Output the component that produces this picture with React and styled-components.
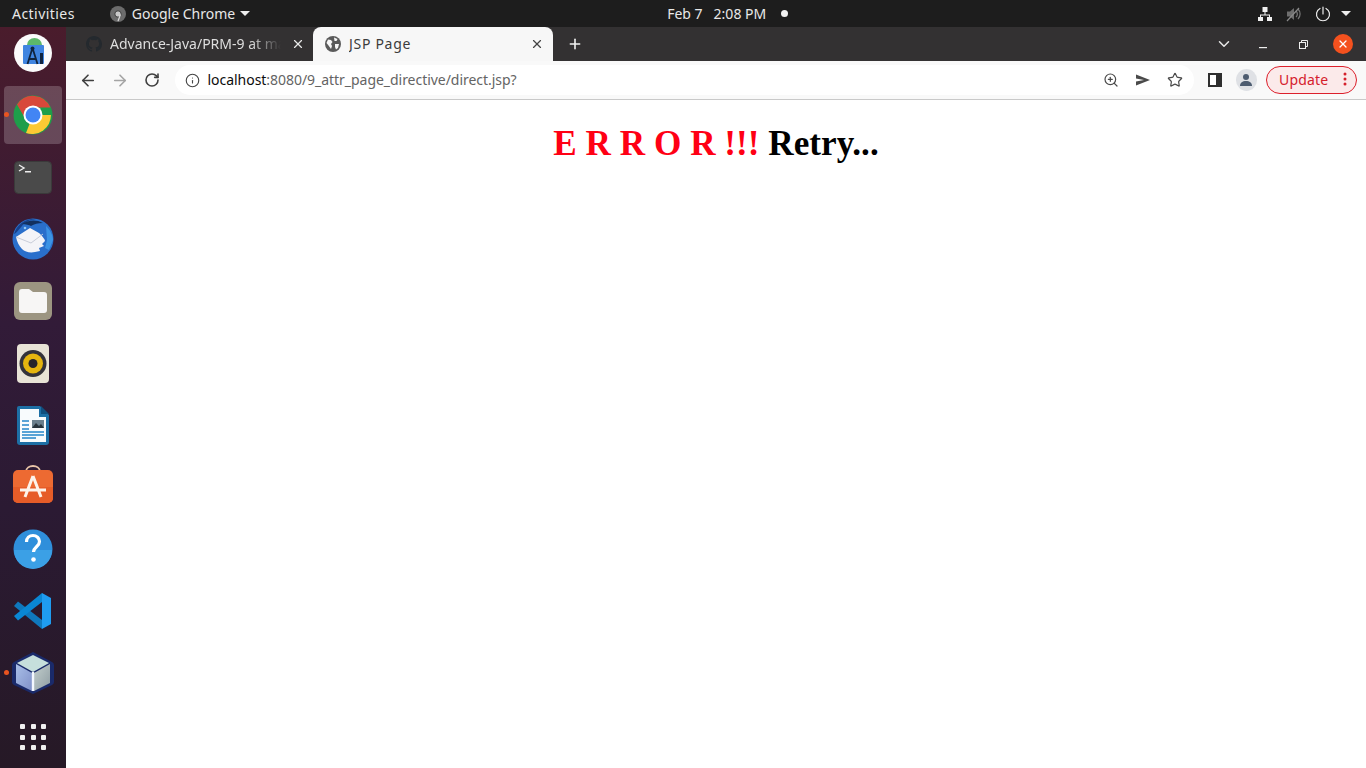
import React from 'react'
import styled, { createGlobalStyle } from 'styled-components'
import { ArrowLeft, ArrowRight, RotateCw, Info, ZoomIn, Star, X, Plus, ChevronDown } from 'lucide-react'

const Global = createGlobalStyle`
  html, body { margin: 0; padding: 0; height: 100%; overflow: hidden; background: #fff; }
  * { box-sizing: border-box; }
`

const Shell = styled.div`
  display: grid;
  grid-template-columns: 66px 1fr;
  grid-template-rows: 27px 1fr;
  width: 100vw;
  height: 100vh;
  overflow: hidden;
  font-family: "Noto Sans", sans-serif;
`

const TopBar = styled.header`
  grid-column: 1 / 3;
  display: flex;
  align-items: center;
  padding: 0 12px;
  background: #1d1d1d;
  color: #e8e8e8;
  font-size: 14px;
  z-index: 2;
`

const Activities = styled.span`
  letter-spacing: 0.45px;
`

const AppMenu = styled.div`
  display: flex;
  align-items: center;
  gap: 6px;
  margin-left: 35px;
`

const Caret = styled.span`
  width: 0;
  height: 0;
  border-left: 5px solid transparent;
  border-right: 5px solid transparent;
  border-top: 5px solid #eee;
  margin-left: ${p => p.$gap || 0}px;
`

const Clock = styled.div`
  display: flex;
  align-items: center;
  gap: 11px;
  margin-left: 417px;
`

const RecDot = styled.span`
  width: 7px;
  height: 7px;
  border-radius: 50%;
  background: #f2f2f2;
  margin-left: 4px;
`

const Tray = styled.div`
  display: flex;
  align-items: center;
  gap: 13px;
  margin-left: auto;
  padding-right: 3px;
`

const Dock = styled.nav`
  display: flex;
  flex-direction: column;
  align-items: center;
  background: linear-gradient(180deg, #4a1c2c 0%, #321b38 40%, #2b1a33 65%, #261926 100%);
`

const DockItem = styled.div`
  position: relative;
  flex: none;
  width: 58px;
  height: 58px;
  margin: ${p => p.$first ? '-3px' : '2px'} 0 2px;
  display: flex;
  align-items: center;
  justify-content: center;
  border-radius: 4px;
  background: ${p => p.$active ? 'rgba(255,255,255,0.2)' : 'transparent'};
  ${p => p.$grid ? 'transform: translateY(2px);' : ''}
`

const RunDot = styled.span`
  position: absolute;
  left: 0;
  top: 26px;
  width: 5px;
  height: 5px;
  border-radius: 50%;
  background: #e95420;
`

const Browser = styled.main`
  display: flex;
  flex-direction: column;
  min-width: 0;
`

const TabStrip = styled.div`
  flex: none;
  display: flex;
  align-items: flex-end;
  height: 34px;
  background: #333132;
  color: #e4e4e4;
`

const Tab = styled.div`
  position: relative;
  flex: none;
  display: flex;
  align-items: center;
  width: ${p => p.$w}px;
  height: 34px;
  padding-left: ${p => p.$pad}px;
  gap: ${p => p.$gap}px;
  font-size: 14px;
  color: ${p => p.$active ? '#3c3c3c' : '#dedede'};
  background: ${p => p.$active ? '#f7f7f7' : 'transparent'};
  border-radius: 8px 8px 0 0;
`

const TabTitle = styled.span`
  width: ${p => p.$w}px;
  margin-top: -2px;
  white-space: nowrap;
  overflow: hidden;
  letter-spacing: ${p => p.$spread || 0}px;
  ${p => p.$fade ? `
    -webkit-mask-image: linear-gradient(90deg, #000 82%, transparent 100%);
    mask-image: linear-gradient(90deg, #000 82%, transparent 100%);
  ` : ''}
`

const TabClose = styled.span`
  position: absolute;
  right: ${p => p.$active ? 9 : 8}px;
  top: 10px;
  display: flex;
  color: ${p => p.$active ? '#444' : '#e8e8e8'};
`

const NewTab = styled.span`
  display: flex;
  align-self: center;
  margin-left: 14px;
  color: #f2f2f2;
`

const WindowControls = styled.div`
  display: flex;
  align-items: center;
  align-self: center;
  margin-left: auto;
  padding-right: 13px;
  color: #e8e8e8;
`

const WinButton = styled.span`
  display: flex;
  align-items: center;
  justify-content: center;
  width: 20px;
  height: 20px;
  margin-left: ${p => p.$gap}px;
  border-radius: 50%;
  background: ${p => p.$close ? '#f4511e' : 'transparent'};
  color: ${p => p.$close ? '#fff' : 'inherit'};
`

const Toolbar = styled.div`
  flex: none;
  display: flex;
  align-items: center;
  height: 39px;
  padding: 0 9px 0 13px;
  background: #f9f9f9;
  border-bottom: 1px solid #c9c9c9;
`

const NavButton = styled.span`
  display: flex;
  justify-content: center;
  width: 18px;
  margin-right: 14px;
  color: ${p => p.$off ? '#a4a4a4' : '#3f3f3f'};
`

const Omnibox = styled.div`
  display: flex;
  align-items: center;
  flex: none;
  width: 1019px;
  height: 30px;
  padding: 0 10px;
  border-radius: 15px;
  background: #fff;
  font-size: 14px;
  color: #646464;
`

const Host = styled.span`
  color: #0c0c0c;
`

const Url = styled.span`
  margin: -2px 0 0 8px;
  white-space: nowrap;
  letter-spacing: -0.04px;
`

const OmniActions = styled.div`
  display: flex;
  align-items: center;
  gap: 16px;
  margin-left: auto;
  padding-right: 1px;
  color: #4a4a4a;
`

const SidePanelSlot = styled.span`
  display: flex;
  margin-left: 14px;
`

const Avatar = styled.span`
  display: flex;
  align-items: center;
  justify-content: center;
  width: 22px;
  height: 22px;
  margin-left: 14px;
  border-radius: 50%;
  background: #dfe1e5;
`

const UpdatePill = styled.div`
  display: flex;
  align-items: center;
  justify-content: space-between;
  flex: none;
  width: 91px;
  height: 28px;
  margin-left: 9px;
  padding: 0 9px 2px 12px;
  border: 1px solid #dc1f2b;
  border-radius: 14px;
  background: #fbeaea;
  color: #d5202c;
  font-size: 14px;
  letter-spacing: 0.2px;
`

const Page = styled.section`
  flex: 1;
  background: #fff;
  text-align: center;
`

const Heading = styled.h1`
  margin: 23px 0 0;
  font-family: "Liberation Serif", serif;
  font-size: 35.2px;
  font-weight: bold;
  line-height: 42px;
  color: #000;
`

const Red = styled.span`
  color: #ff0014;
`

const GridDots = styled.div`
  display: grid;
  grid-template-columns: repeat(3, 5px);
  grid-auto-rows: 5px;
  gap: 5.5px;
`

const GridDot = styled.span`
  border-radius: 1px;
  background: #f0f0f0;
`

const Github = () => (
  <svg width="16" height="16" viewBox="0 0 16 16" fill="#24292e">
    <path d="M8 0C3.58 0 0 3.58 0 8c0 3.54 2.29 6.53 5.47 7.59.4.07.55-.17.55-.38v-1.34c-2.23.48-2.69-1.07-2.69-1.07-.36-.92-.89-1.17-.89-1.17-.73-.5.05-.49.05-.49.8.06 1.23.83 1.23.83.71 1.22 1.87.87 2.33.66.07-.52.28-.87.51-1.07-1.78-.2-3.64-.89-3.64-3.95 0-.87.31-1.59.82-2.15-.08-.2-.36-1.02.08-2.12 0 0 .67-.21 2.2.82a7.6 7.6 0 0 1 4 0c1.53-1.04 2.2-.82 2.2-.82.44 1.1.16 1.92.08 2.12.51.56.82 1.27.82 2.15 0 3.07-1.87 3.75-3.65 3.95.29.25.54.73.54 1.48v2.2c0 .21.15.46.55.38A8 8 0 0 0 16 8c0-4.42-3.58-8-8-8z" />
  </svg>
)

const Globe = () => (
  <svg width="16" height="16" viewBox="0 0 16 16">
    <circle cx="8" cy="8" r="8" fill="#5a5a5a" />
    <path d="M3 3.5l3 .5 1.5 2-1.5 2 1 2-1 3-2.5-3.5L1.5 7zM9 1.5l3.5 1.5-1 2H9.5zM10 8h4l-1 4-2 1.5-1-2.5z" fill="#f7f7f7" />
  </svg>
)

const GnomeChrome = () => (
  <svg width="16" height="16" viewBox="0 0 16 16">
    <circle cx="8" cy="8" r="8" fill="#6c6c6c" />
    <circle cx="8" cy="8" r="3.2" fill="#c8c8c8" stroke="#3a3a3a" />
    <path d="M10.5 8.5 8 15" stroke="#ddd" strokeWidth="1.2" />
  </svg>
)

const Network = () => (
  <svg width="16" height="16" viewBox="0 0 16 16" fill="#f0f0f0">
    <rect x="5.5" y="1" width="5" height="5" />
    <rect x="1" y="11" width="5" height="4" />
    <rect x="10" y="11" width="5" height="4" />
    <path d="M7.5 6h1v2.5H13V11h-1V9.5H4V11H3V8.5h4.5z" />
  </svg>
)

const Muted = () => (
  <svg width="16" height="16" viewBox="0 0 16 16" fill="none">
    <path d="M1 5.5h3L8 2v12l-4-3.5H1z" fill="#6e6e6e" />
    <path d="M10 5a4 4 0 0 1 0 6M12 3a7 7 0 0 1 0 10" stroke="#777" strokeWidth="1.2" />
    <path d="M1 15 13 2" stroke="#8a8a8a" strokeWidth="1.2" />
  </svg>
)

const Power = () => (
  <svg width="16" height="16" viewBox="0 0 16 16" fill="none" stroke="#eee" strokeWidth="1.2" strokeLinecap="round">
    <path d="M5 2.5a6.5 6.5 0 1 0 6 0" />
    <path d="M8 1v7" />
  </svg>
)

const Send = () => (
  <svg width="16" height="16" viewBox="0 0 16 16" fill="#4a4a4a">
    <path d="M1 2.5 15 8 1 13.5V9.5L9 8 1 6.5z" />
  </svg>
)

const SidePanel = () => (
  <svg width="14" height="14" viewBox="0 0 14 14">
    <rect width="14" height="14" fill="#2f2f2f" />
    <rect x="2" y="2" width="6" height="10" fill="#fff" />
  </svg>
)

const Person = () => (
  <svg width="14" height="14" viewBox="0 0 14 14" fill="#4d5c70">
    <circle cx="7" cy="4" r="3" />
    <path d="M1 13c0-3.3 2.5-5 6-5s6 1.7 6 5z" />
  </svg>
)

const Dots = () => (
  <svg width="4" height="14" viewBox="0 0 4 14" fill="#d5202c">
    <circle cx="2" cy="2" r="1.5" />
    <circle cx="2" cy="7" r="1.5" />
    <circle cx="2" cy="12" r="1.5" />
  </svg>
)

const Restore = () => (
  <svg width="9" height="9" viewBox="0 0 9 9" fill="none" stroke="#eee" strokeWidth="1">
    <rect x="0.5" y="2.5" width="6" height="6" />
    <path d="M2.5 2.5v-2h6v6h-2" />
  </svg>
)

const Minimize = () => (
  <svg width="10" height="10" viewBox="0 0 10 10">
    <rect x="1" y="8" width="8" height="1.2" fill="#eee" />
  </svg>
)

const Studio = () => (
  <svg width="38" height="38" viewBox="0 0 38 38">
    <circle cx="19" cy="19" r="19" fill="#fbfbfb" />
    <path d="M13 11a7.5 7 0 0 1 15 0z" fill="#5cb86a" />
    <rect x="9" y="11" width="21" height="19" rx="1" fill="#3f84e0" />
    <path d="M18.5 14 13.5 30M18.5 14l5 16M15 25h7" stroke="#10243f" strokeWidth="1.8" fill="none" />
    <circle cx="18.5" cy="14.5" r="2" fill="#10243f" />
    <rect x="26" y="19" width="3" height="11" fill="#10243f" />
  </svg>
)

const ChromeIcon = () => (
  <svg width="40" height="40" viewBox="0 0 40 40">
    <circle cx="20" cy="20" r="19.5" fill="#1e9e4a" />
    <path d="M20 20H38A19 19 0 0 1 13 38z" fill="#fcc934" />
    <path d="M4 9.5A19 19 0 0 1 37.5 12.5H20L13 25z" fill="#d8483a" />
    <circle cx="20" cy="20" r="9.5" fill="#fff" />
    <circle cx="20" cy="20" r="7.5" fill="#4285f4" />
  </svg>
)

const Terminal = () => (
  <svg width="38" height="33" viewBox="0 0 38 33">
    <rect x="0.5" y="0.5" width="37" height="32" rx="4" fill="#4a4a4a" stroke="#3a3a3a" />
    <path d="M5 4l5 3-5 3" stroke="#eee" strokeWidth="1.4" fill="none" />
    <rect x="11" y="10" width="6" height="1.5" fill="#eee" />
  </svg>
)

const Thunderbird = () => (
  <svg width="42" height="42" viewBox="0 0 42 42">
    <circle cx="21" cy="21" r="20.5" fill="#2a6fcb" />
    <path d="M2 16C5 6 14 0 24 1c-7 1-11 3-14 7-3 3-5 7-8 8z" fill="#17408a" />
    <path d="M10 6c6-4 14-5 21-1-5 0-9 1-12 3-2-1-5-2-9-2z" fill="#12305f" />
    <path d="M34 8c4 4 7 9 7 14l-4 10-4-2 2-8z" fill="#3c93e4" />
    <path d="M4 19 18 10l9 5c3 3 6 6 6 8l-3 3 2 2-5 2 1 3-5 1c-5 1-10 0-13-3-3-3-5-7-6-12z" fill="#f4f4f8" />
    <path d="M4 19l15 6 12-9" stroke="#c9cdd9" fill="none" />
    <circle cx="13" cy="10" r="1.3" fill="#8fc4f2" />
  </svg>
)

const Files = () => (
  <svg width="38" height="38" viewBox="0 0 38 38">
    <rect width="38" height="38" rx="6" fill="#9c9581" />
    <path d="M5 10a3 3 0 0 1 3-3h7l4 3h11a3 3 0 0 1 3 3v15a3 3 0 0 1-3 3H8a3 3 0 0 1-3-3z" fill="#f7f6f5" />
  </svg>
)

const Rhythmbox = () => (
  <svg width="32" height="39" viewBox="0 0 32 39">
    <rect width="32" height="39" rx="4" fill="#e8e3d6" />
    <circle cx="16" cy="19.5" r="13.5" fill="#33323a" />
    <circle cx="16" cy="19.5" r="10" fill="#e5b50f" />
    <circle cx="16" cy="19.5" r="4.5" fill="#26252a" />
  </svg>
)

const Writer = () => (
  <svg width="32" height="39" viewBox="0 0 32 39">
    <path d="M2 0h21l9 9v27a3 3 0 0 1-3 3H3a3 3 0 0 1-3-3V2a2 2 0 0 1 2-2z" fill="#1d6fa5" />
    <path d="M3 3h19v8h7v25H3z" fill="#f8fbfd" />
    <path d="M24 0l8 8h-8z" fill="#104f7e" />
    <rect x="15" y="14" width="12" height="8" fill="#6a7f8d" />
    <path d="M15 22l4-5 3 3 2-2 3 4z" fill="#27343d" />
    <path d="M5 15h7M5 19h7M5 23h7M5 26h22M5 29h22M5 32h14" stroke="#2487c9" strokeWidth="1.6" />
  </svg>
)

const Software = () => (
  <svg width="40" height="44" viewBox="0 0 40 44">
    <path d="M13 7c0-8 14-8 14 0" stroke="#e9c5a8" strokeWidth="1.8" fill="none" />
    <rect y="5" width="40" height="33" rx="5" fill="#ed6a32" />
    <path d="M0 22h40v11a5 5 0 0 1-5 5H5a5 5 0 0 1-5-5z" fill="#e65c28" />
    <path d="M20 11 12 32M20 11l8 21M7 25h26" stroke="#fdf3ea" strokeWidth="3" fill="none" />
  </svg>
)

const Help = () => (
  <svg width="40" height="40" viewBox="0 0 40 40">
    <circle cx="20" cy="20" r="19.5" fill="#2f8fdb" />
    <path d="M1 21h38a19 19 0 0 1-38 0z" fill="#3ba0e6" />
    <path d="M13.5 13c0-4 3-6.5 6.5-6.5s6.5 2.5 6.5 6c0 5-6 5.5-6 10.5" stroke="#fff" strokeWidth="3.2" fill="none" />
    <circle cx="20.5" cy="30.5" r="2.3" fill="#fff" />
  </svg>
)

const VsCode = () => (
  <svg width="38" height="38" viewBox="0 0 38 38">
    <path d="M0 14l4-4.5L28 28v9z" fill="#0f78bd" />
    <path d="M0 24l4 4.5L28 10V1z" fill="#0a87d4" />
    <path d="M28 1l9 5v26l-9 5z" fill="#1f9cf0" />
  </svg>
)

const NetBeans = () => (
  <svg width="42" height="42" viewBox="0 0 42 42">
    <defs>
      <linearGradient id="nbLeft" x1="0" y1="0" x2="1" y2="1">
        <stop offset="0" stopColor="#a9bfe8" />
        <stop offset="1" stopColor="#7f90c8" />
      </linearGradient>
      <linearGradient id="nbRight" x1="0" y1="0" x2="1" y2="1">
        <stop offset="0" stopColor="#c3cfcd" />
        <stop offset="1" stopColor="#8f9da3" />
      </linearGradient>
    </defs>
    <path d="M21 0 40 10q2 1 2 3v17q0 2-2 3L21 42 2 33q-2-1-2-3V13q0-2 2-3z" fill="#1a2a6a" />
    <path d="M21 3 37 11 21 20 5 11z" fill="#c6dfdc" />
    <path d="M4 12l16 9v18L4 31z" fill="url(#nbLeft)" />
    <path d="M22 21l16-9v19l-16 8z" fill="url(#nbRight)" />
    <path d="M21 20v19" stroke="#f4f8ff" strokeWidth="2.4" />
  </svg>
)

const apps = [
  { icon: <Studio />, first: true },
  { icon: <ChromeIcon />, active: true, running: true },
  { icon: <Terminal /> },
  { icon: <Thunderbird /> },
  { icon: <Files /> },
  { icon: <Rhythmbox /> },
  { icon: <Writer /> },
  { icon: <Software /> },
  { icon: <Help /> },
  { icon: <VsCode /> },
  { icon: <NetBeans />, running: true }
]

const App = () => (
  <Shell>
    <Global />
    <TopBar>
      <Activities>Activities</Activities>
      <AppMenu>
        <GnomeChrome />
        <span>Google Chrome</span>
        <Caret $gap={-1} />
      </AppMenu>
      <Clock>
        <span>Feb 7</span>
        <span>2:08 PM</span>
        <RecDot />
      </Clock>
      <Tray>
        <Network />
        <Muted />
        <Power />
        <Caret $gap={-3} />
      </Tray>
    </TopBar>
    <Dock>
      {apps.map((app, i) => (
        <DockItem key={i} $first={app.first} $active={app.active}>
          {app.running && <RunDot />}
          {app.icon}
        </DockItem>
      ))}
      <DockItem $grid>
        <GridDots>
          {Array.from({ length: 9 }, (_, i) => <GridDot key={i} />)}
        </GridDots>
      </DockItem>
    </Dock>
    <Browser>
      <TabStrip>
        <Tab $w={247} $pad={20} $gap={8}>
          <Github />
          <TabTitle $w={171} $fade>Advance-Java/PRM-9 at main</TabTitle>
          <TabClose><X size={14} strokeWidth={2} /></TabClose>
        </Tab>
        <Tab $w={240} $pad={12} $gap={8} $active>
          <Globe />
          <TabTitle $w={100} $spread={0.7}>JSP Page</TabTitle>
          <TabClose $active><X size={14} strokeWidth={2} /></TabClose>
        </Tab>
        <NewTab><Plus size={16} strokeWidth={2.4} /></NewTab>
        <WindowControls>
          <ChevronDown size={18} strokeWidth={2} />
          <WinButton $gap={20}><Minimize /></WinButton>
          <WinButton $gap={20}><Restore /></WinButton>
          <WinButton $gap={20} $close><X size={12} strokeWidth={2.6} /></WinButton>
        </WindowControls>
      </TabStrip>
      <Toolbar>
        <NavButton><ArrowLeft size={19} strokeWidth={2.2} /></NavButton>
        <NavButton $off><ArrowRight size={19} strokeWidth={2.2} /></NavButton>
        <NavButton><RotateCw size={16} strokeWidth={2.4} /></NavButton>
        <Omnibox>
          <Info size={15} color="#444" strokeWidth={1.8} />
          <Url><Host>localhost</Host>:8080/9_attr_page_directive/direct.jsp?</Url>
          <OmniActions>
            <ZoomIn size={16} strokeWidth={1.8} />
            <Send />
            <Star size={16} strokeWidth={1.8} />
          </OmniActions>
        </Omnibox>
        <SidePanelSlot><SidePanel /></SidePanelSlot>
        <Avatar><Person /></Avatar>
        <UpdatePill>
          <span>Update</span>
          <Dots />
        </UpdatePill>
      </Toolbar>
      <Page>
        <Heading><Red>E R R O R !!!</Red> Retry...</Heading>
      </Page>
    </Browser>
  </Shell>
)

export default App
